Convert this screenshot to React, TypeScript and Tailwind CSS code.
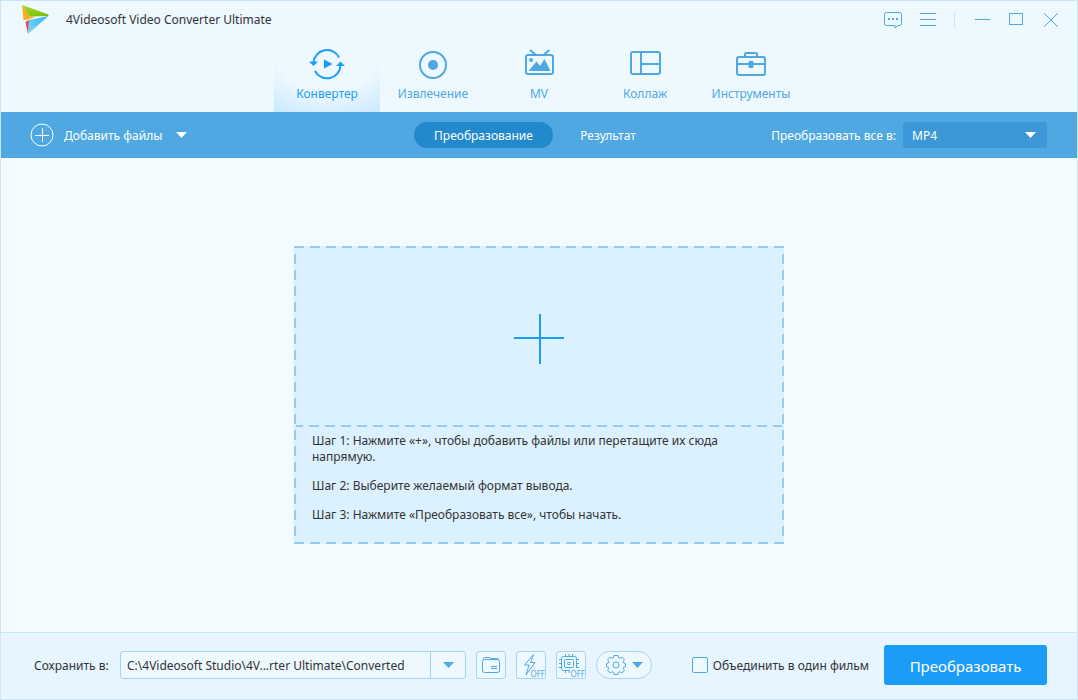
import { useState, type ReactNode } from 'react'

type TabId = 'convert' | 'rip' | 'mv' | 'collage' | 'tools'

const ConvertIcon = () => (
  <svg width="36" height="32" viewBox="0 0 36 32" fill="none" stroke="currentColor" strokeWidth="2">
    <path d="M4.500 14.500A13.500 13.500 0 0 1 30 9.500" />
    <path d="M31.500 17A13.500 13.500 0 0 1 6 23" />
    <path d="M0 13.500h9l-4.500 4.500z" fill="currentColor" stroke="none" />
    <path d="M27 18h9l-4.500-4.500z" fill="currentColor" stroke="none" />
    <path d="M15 11.500v9l8.500-4.500z" fill="currentColor" stroke="none" />
  </svg>
)

const RipIcon = () => (
  <svg width="32" height="32" viewBox="0 0 32 32" fill="none" stroke="currentColor" strokeWidth="2">
    <circle cx="16" cy="17" r="13" />
    <circle cx="16" cy="17" r="5" fill="currentColor" stroke="none" />
  </svg>
)

const MvIcon = () => (
  <svg width="32" height="32" viewBox="0 0 32 32" fill="none" stroke="currentColor" strokeWidth="2">
    <rect x="3" y="7" width="27" height="19" rx="2" />
    <path d="M7 2l6 5M26.500 2l-6 5" />
    <circle cx="8" cy="12" r="2" fill="currentColor" stroke="none" />
    <path d="M5.500 23l8-9.500 3.500 4.500 4.500-7 6 12z" fill="currentColor" stroke="none" />
  </svg>
)

const CollageIcon = () => (
  <svg width="32" height="32" viewBox="0 0 32 32" fill="none" stroke="currentColor" strokeWidth="2">
    <rect x="2" y="4" width="29" height="22" rx="2" />
    <path d="M12 4v22M12 16h19" />
  </svg>
)

const ToolsIcon = () => (
  <svg width="32" height="32" viewBox="0 0 32 32" fill="none" stroke="currentColor" strokeWidth="2">
    <rect x="2" y="9" width="28" height="18" rx="2" />
    <path d="M10 9V6a1 1 0 0 1 1-1h10a1 1 0 0 1 1 1v3M2 16h28" />
    <rect x="13.500" y="13" width="5" height="7" rx="1" fill="currentColor" stroke="none" />
  </svg>
)

const TABS: { id: TabId; label: string; icon: ReactNode }[] = [
  { id: 'convert', label: 'Конвертер', icon: <ConvertIcon /> },
  { id: 'rip', label: 'Извлечение', icon: <RipIcon /> },
  { id: 'mv', label: 'MV', icon: <MvIcon /> },
  { id: 'collage', label: 'Коллаж', icon: <CollageIcon /> },
  { id: 'tools', label: 'Инструменты', icon: <ToolsIcon /> },
]

const STEPS = [
  'Шаг 1: Нажмите «+», чтобы добавить файлы или перетащите их сюда напрямую.',
  'Шаг 2: Выберите желаемый формат вывода.',
  'Шаг 3: Нажмите «Преобразовать все», чтобы начать.',
]

const Caret = () => (
  <svg width="11" height="6" viewBox="0 0 11 6" fill="currentColor">
    <path d="M0 0h11L5.500 6z" />
  </svg>
)

const Logo = () => (
  <svg width="28" height="30" viewBox="0 0 28 30">
    <defs>
      <linearGradient id="leaf" x1="0" y1="0" x2="1" y2="1">
        <stop offset="0" stopColor="#a5dc20" />
        <stop offset="1" stopColor="#78b80c" />
      </linearGradient>
      <linearGradient id="sky" x1="0" y1="1" x2="1" y2="0">
        <stop offset="0" stopColor="#7fdcfb" />
        <stop offset="1" stopColor="#35b4ee" />
      </linearGradient>
    </defs>
    <path d="M1 0L27.500 9.500V11L8 11.500z" fill="url(#leaf)" />
    <path d="M1 0L8 11l6 1-7 2.500-4.500 0.500z" fill="#fbae1f" />
    <path d="M27.500 11L7 29 8 15z" fill="url(#sky)" />
    <path d="M4.500 17l3.500-2-1 14z" fill="#dc4a50" />
  </svg>
)

const TitleBar = () => (
  <div className="flex h-[38px] items-center pr-4.5 pl-5">
    <Logo />
    <h1 className="ml-[17px] flex-1 text-[12px] text-[#333]">4Videosoft Video Converter Ultimate</h1>
    <div className="flex items-center text-[#4fa8e2]">
      <button type="button" aria-label="Отзыв">
        <svg width="20" height="18" viewBox="0 0 20 18" fill="none" stroke="currentColor">
          <path d="M3.500 1.500h13a2 2 0 0 1 2 2v9a2 2 0 0 1-2 2h-1.500l-3 2.500v-2.500h-8.500a2 2 0 0 1-2-2v-9a2 2 0 0 1 2-2z" />
          <path d="M5 8h2M9 8h2M13 8h2" strokeWidth="2" />
        </svg>
      </button>
      <button type="button" aria-label="Меню" className="ml-4">
        <svg width="18" height="16" viewBox="0 0 18 16" stroke="currentColor">
          <path d="M1 1.500h16M1 7.500h16M1 13.500h16" />
        </svg>
      </button>
      <span className="ml-[17px] h-4 w-px bg-[#c9e5f7]" />
      <button type="button" aria-label="Свернуть" className="ml-5">
        <svg width="16" height="16" viewBox="0 0 16 16" stroke="currentColor">
          <path d="M0 7.500h15" />
        </svg>
      </button>
      <button type="button" aria-label="Развернуть" className="ml-4.5">
        <svg width="15" height="16" viewBox="0 0 15 16" fill="none" stroke="currentColor">
          <path d="M0.500 1.500h13v11h-13z" />
        </svg>
      </button>
      <button type="button" aria-label="Закрыть" className="ml-[19px]">
        <svg width="16" height="16" viewBox="0 0 16 16" stroke="currentColor">
          <path d="M1 1l14 14M15 1L1 15" />
        </svg>
      </button>
    </div>
  </div>
)

const DropZone = () => (
  <section className="flex w-[490px] flex-col bg-[#dcf1fe]">
    <div className="h-0.5 bg-[repeating-linear-gradient(90deg,#93cbf2_0_10px,transparent_10px_16px)]" />
    <div className="flex">
      <div className="w-0.5 shrink-0 bg-[repeating-linear-gradient(180deg,transparent_0_6px,#93cbf2_6px_16px)]" />
      <div className="flex-1">
        <button type="button" aria-label="Добавить файлы" className="flex h-[177px] w-full items-center justify-center pt-1 text-[#1b9df5]">
          <svg width="50" height="50" viewBox="0 0 50 50" stroke="currentColor" strokeWidth="2">
            <path d="M0 24h50M26 0v50" />
          </svg>
        </button>
        <div className="h-0.5 bg-[repeating-linear-gradient(90deg,#93cbf2_0_7px,transparent_7px_13px,#93cbf2_13px_16px)]" />
        <div className="h-[115px] space-y-[13px] px-4 pt-1.5 text-[12px] leading-4 text-[#333]">
          {STEPS.map((step) => (
            <p key={step}>{step}</p>
          ))}
        </div>
      </div>
      <div className="w-0.5 shrink-0 bg-[repeating-linear-gradient(180deg,transparent_0_6px,#93cbf2_6px_16px)]" />
    </div>
    <div className="h-0.5 bg-[repeating-linear-gradient(90deg,#93cbf2_0_10px,transparent_10px_16px)]" />
  </section>
)

const Footer = () => {
  const [merge, setMerge] = useState(false)
  const toolButton = 'relative h-7 w-[30px] rounded-[3px] border border-[#a6d4f2] bg-[#edf8ff]'

  return (
    <footer className="flex items-center border-t border-[#c9e5f7] bg-[#e6f5ff] pt-3 pr-[30px] pb-3.5 pl-[33px] text-[12px] text-[#333]">
      <label htmlFor="output" className="w-[86px] pt-0.5 whitespace-nowrap">Сохранить в:</label>
      <div className="flex h-7 w-[346px] rounded-[3px] border border-[#a6d4f2] bg-[#edf8ff]">
        <input id="output" readOnly className="min-w-0 flex-1 px-1.5 pt-0.5 outline-none" value="C:\4Videosoft Studio\4V...rter Ultimate\Converted" />
        <button type="button" aria-label="Выбрать папку" className="flex w-[35px] items-center justify-center border-l border-[#a6d4f2] text-[#4fa8e2]">
          <Caret />
        </button>
      </div>
      <div className="ml-2.5 flex gap-2.5 text-[#4fa8e2]">
        <button type="button" aria-label="Открыть папку" className={toolButton}>
          <svg width="28" height="26" viewBox="0 0 28 26" fill="none" stroke="currentColor">
            <path d="M7.500 7.500h13a2 2 0 0 1 2 2v9a2 2 0 0 1-2 2h-13a2 2 0 0 1-2-2v-9a2 2 0 0 1 2-2z" />
            <path d="M6.500 7.500v-1a1 1 0 0 1 1-1h5l2 1h6a1 1 0 0 1 1 1.500M14 14.500h6M14 16.500h6" />
          </svg>
        </button>
        <button type="button" aria-label="Высокая скорость" className={toolButton}>
          <svg width="28" height="26" viewBox="0 0 28 26" fill="none" stroke="currentColor" strokeLinejoin="round">
            <path d="M16.500 2.500l-9 10.500h4.500l-3 10 9-12.500h-4.500z" />
          </svg>
          <span className="absolute right-0 bottom-0 text-[8px] leading-[9px]">OFF</span>
        </button>
        <button type="button" aria-label="Аппаратное ускорение" className={toolButton}>
          <svg width="28" height="26" viewBox="0 0 28 26" fill="none" stroke="currentColor">
            <path d="M13 18.500H6.500a2 2 0 0 1-2-2v-10a2 2 0 0 1 2-2h11a2 2 0 0 1 2 2V16" />
            <rect x="7.500" y="7.500" width="9" height="8" rx="1" />
            <rect x="11" y="10.500" width="2" height="2" />
            <path d="M8.500 2v2.500M12 2v2.500M15.500 2v2.500M8.500 18.500V21M12 18.500V21M2 7.500h2.500M2 11.500h2.500M2 15.500h2.500M19.500 7.500H22M19.500 11.500H22M19.500 15.500H22" />
          </svg>
          <span className="absolute right-0 bottom-0 text-[8px] leading-[9px]">OFF</span>
        </button>
        <button type="button" aria-label="Настройки" className="flex h-7 w-14 items-center justify-center gap-1.5 rounded-full border border-[#a6d4f2] bg-[#edf8ff]">
          <svg width="20" height="20" viewBox="0 0 20 20" fill="none" stroke="currentColor" strokeLinejoin="round">
            <path d="M8 0.500h4l.6 2.300 1.300.5 2.100-1.100 2.300 2.400-1.100 2.100.5 1.200 1.800.6v3l-1.800.7-.5 1.200 1.100 2.100-2.300 2.400-2.100-1.100-1.300.5-.6 2.200H8l-.6-2.200-1.300-.5L4 17.900l-2.300-2.400 1.100-2.100-.5-1.200-1.800-.7v-3l1.800-.6.5-1.200L1.700 4.600 4 2.200l2.100 1.100 1.300-.5z" />
            <circle cx="10" cy="10" r="3" />
          </svg>
          <Caret />
        </button>
      </div>
      <label className="ml-auto flex items-center gap-[5px] whitespace-nowrap">
        <input
          type="checkbox"
          checked={merge}
          onChange={(e) => setMerge(e.target.checked)}
          className="size-4 appearance-none rounded-[2px] border border-[#4fa8e2] bg-[#edf8ff] checked:bg-[#4fa8e2]"
        />
        <span className="pt-0.5">Объединить в один фильм</span>
      </label>
      <button type="button" className="ml-[15px] h-10 w-[163px] rounded-[3px] bg-[#1b9df7] pt-0.5 text-[15px] text-white">
        Преобразовать
      </button>
    </footer>
  )
}

const App = () => {
  const [activeTab, setActiveTab] = useState<TabId>('convert')
  const [format, setFormat] = useState('MP4')

  return (
    <div className="flex min-h-screen flex-col border border-[#c9e5f7] bg-[#f4fbff] font-['Noto_Sans',sans-serif]">
      <header className="bg-[#edf8ff]">
        <TitleBar />
        <nav className="flex justify-center">
          {TABS.map((tab) => (
            <button
              key={tab.id}
              type="button"
              onClick={() => setActiveTab(tab.id)}
              className={`flex h-[73px] w-[106px] flex-col items-center pt-[9px] text-[12px] ${
                activeTab === tab.id
                  ? 'bg-[linear-gradient(to_bottom,#edf8ff_0%,transparent_60%),radial-gradient(ellipse_80%_90%_at_50%_20%,#edf8ff_60%,#c8e8fe_110%)] text-[#1b9df5]'
                  : 'text-[#4fa8e2]'
              }`}
            >
              {tab.icon}
              <span className="mt-1.5 leading-4">{tab.label}</span>
            </button>
          ))}
        </nav>
      </header>

      <div className="grid h-[46px] grid-cols-[1fr_auto_1fr] items-center bg-[#4fa8e2] pr-[30px] pl-[29px] text-[12px] text-white">
        <button type="button" className="flex items-center justify-self-start">
          <svg width="24" height="24" viewBox="0 0 24 24" fill="none" stroke="currentColor">
            <circle cx="12" cy="12" r="11" />
            <path d="M5 12.500h14M12.500 5v14" />
          </svg>
          <span className="mr-3.5 ml-2.5 pt-0.5">Добавить файлы</span>
          <Caret />
        </button>
        <div className="flex">
          <button type="button" className="h-[26px] w-[139px] rounded-full bg-[#2289cd] pt-0.5">Преобразование</button>
          <button type="button" className="h-[26px] w-[110px] pt-0.5">Результат</button>
        </div>
        <div className="flex items-center justify-self-end">
          <label htmlFor="format" className="mr-[7px] pt-0.5">Преобразовать все в:</label>
          <div className="relative">
            <select
              id="format"
              value={format}
              onChange={(e) => setFormat(e.target.value)}
              className="h-[26px] w-36 appearance-none rounded-[3px] bg-[#3c97d6] px-[9px] pt-0.5 outline-none"
            >
              <option>MP4</option>
            </select>
            <span className="pointer-events-none absolute top-2.5 right-[11px]">
              <Caret />
            </span>
          </div>
        </div>
      </div>

      <main className="flex flex-1 items-center justify-center">
        <DropZone />
      </main>

      <Footer />
    </div>
  )
}

export default App
